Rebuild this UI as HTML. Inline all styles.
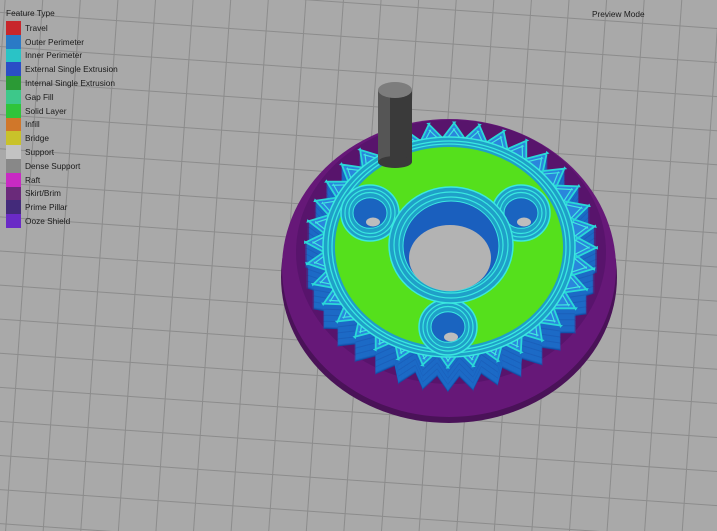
<!DOCTYPE html>
<html><head><meta charset="utf-8"><style>
html,body{margin:0;padding:0;width:717px;height:531px;overflow:hidden;background:#a9a9a9;font-family:"Liberation Sans",sans-serif}
#legend{position:absolute;left:6px;top:8px;font-size:8.3px;color:#1a1a1a}
#legend .t{margin-bottom:3px}
.r{display:flex;align-items:center;height:13.8px}
.s{width:15px;height:13.8px;margin-right:4px}
#pm{position:absolute;left:592px;top:9px;font-size:8.3px;color:#1a1a1a}
svg{position:absolute;left:0;top:0}
</style></head><body>
<svg id="g" width="717" height="531" viewBox="0 0 717 531"></svg>
<div id="legend"><div class="t">Feature Type</div>
<div class="r"><div class="s" style="background:#c8262b"></div>Travel</div>
<div class="r"><div class="s" style="background:#2a7ac6"></div>Outer Perimeter</div>
<div class="r"><div class="s" style="background:#2ac3c6"></div>Inner Perimeter</div>
<div class="r"><div class="s" style="background:#2a4ec6"></div>External Single Extrusion</div>
<div class="r"><div class="s" style="background:#2b9a35"></div>Internal Single Extrusion</div>
<div class="r"><div class="s" style="background:#3dc88a"></div>Gap Fill</div>
<div class="r"><div class="s" style="background:#2fc43a"></div>Solid Layer</div>
<div class="r"><div class="s" style="background:#d0772a"></div>Infill</div>
<div class="r"><div class="s" style="background:#c9c22a"></div>Bridge</div>
<div class="r"><div class="s" style="background:#c3c3c3"></div>Support</div>
<div class="r"><div class="s" style="background:#888"></div>Dense Support</div>
<div class="r"><div class="s" style="background:#c82ac3"></div>Raft</div>
<div class="r"><div class="s" style="background:#6a2a7a"></div>Skirt/Brim</div>
<div class="r"><div class="s" style="background:#432a7a"></div>Prime Pillar</div>
<div class="r"><div class="s" style="background:#6a2ac6"></div>Ooze Shield</div>
</div>
<div id="pm">Preview Mode</div>
<script>
var s=document.getElementById('g'),h='';
h+='<g transform="rotate(4 358 265)" stroke="#8c8c8c" stroke-width="1">';
for(var x=-200;x<1000;x+=37.5)h+='<line x1="'+x+'" y1="-200" x2="'+x+'" y2="800"/>';
for(var y=-200;y<800;y+=34)h+='<line x1="-200" y1="'+y+'" x2="1000" y2="'+y+'"/>';
h+='</g>';
function gear(cx,cy,rt,rr,ky,n){var p='';for(var i=0;i<n*4;i++){var a=i/(n*4)*Math.PI*2,r=(i%4<2)?rt:rr;var b=a+((i%4==0)?0.025:(i%4==1)?-0.025:(i%4==2)?0.03:-0.03);p+=(i?'L':'M')+(cx+r*Math.cos(b)).toFixed(1)+','+(cy+r*ky*Math.sin(b)).toFixed(1);}return p+'Z';}
// skirt
h+='<ellipse cx="449" cy="277" rx="168" ry="146" fill="#4a1258"/>';
h+='<ellipse cx="449" cy="268" rx="167" ry="149" fill="#661878"/>';
h+='<ellipse cx="451" cy="252" rx="155" ry="132" fill="#58146c"/>';
// gear side
h+='<path d="'+gear(451,270,146,126,0.84,36)+'" fill="#0f4fa8"/>';
for(var k=0;k<24;k++)h+='<path d="'+gear(451,269-k,146,126,0.84,36)+'" fill="'+(k%6==0?'#1a5fba':'#1c6ac6')+'"/>';
h+='<path d="'+gear(451,245,146,126,0.84,36)+'" fill="#2a86dc" stroke="#2ad8d8" stroke-width="1.8"/>';
h+='<path d="'+gear(451,245,138,120,0.84,36)+'" fill="none" stroke="#40e8e0" stroke-width="1.2"/>';
// ring
h+='<ellipse cx="449" cy="247" rx="126" ry="110" fill="#1fa0c8" stroke="#3ae8e0" stroke-width="1.5"/>';
h+='<ellipse cx="449" cy="247" rx="121" ry="106" fill="none" stroke="#3ae8e0" stroke-width="1.3"/>';
h+='<ellipse cx="449" cy="247" rx="117" ry="103" fill="none" stroke="#3ae8e0" stroke-width="1.3"/>';
h+='<ellipse cx="449" cy="247" rx="114" ry="100" fill="#55e01c"/>';
function boss(cx,cy,r){h+='<ellipse cx="'+cx+'" cy="'+cy+'" rx="'+(r+12)+'" ry="'+(r+11)+'" fill="#1fa0c8" stroke="#3ae8e0" stroke-width="1.5"/>';
h+='<ellipse cx="'+cx+'" cy="'+cy+'" rx="'+(r+8)+'" ry="'+(r+7)+'" fill="none" stroke="#3ae8e0" stroke-width="1.2"/>';
h+='<ellipse cx="'+cx+'" cy="'+cy+'" rx="'+(r+4)+'" ry="'+(r+3.5)+'" fill="none" stroke="#3ae8e0" stroke-width="1.2"/>';
h+='<ellipse cx="'+cx+'" cy="'+cy+'" rx="'+r+'" ry="'+(r*0.9)+'" fill="#1a64c0" stroke="#3ae8e0"/>';}
boss(370,213,17);boss(521,213,17);boss(448,327,17);
[[373,222],[524,222],[451,337]].forEach(function(c){h+='<ellipse cx="'+c[0]+'" cy="'+c[1]+'" rx="7" ry="4.5" fill="#bdbdbd"/>';});
h+='<ellipse cx="451" cy="245" rx="62" ry="58" fill="#1fa0c8" stroke="#3ae8e0" stroke-width="1.5"/>';
h+='<ellipse cx="451" cy="245" rx="57" ry="53" fill="none" stroke="#3ae8e0" stroke-width="1.2"/>';
h+='<ellipse cx="451" cy="245" rx="52" ry="48" fill="none" stroke="#3ae8e0" stroke-width="1.2"/>';
h+='<ellipse cx="451" cy="246" rx="48" ry="45" fill="#1a5fbe" stroke="#3ae8e0"/>';
h+='<ellipse cx="450" cy="258" rx="41" ry="33" fill="#b3b3b3"/>';
// pillar
h+='<rect x="378" y="90" width="34" height="72" fill="#3a3a3a"/>';
h+='<rect x="378" y="90" width="12" height="72" fill="#555"/>';
h+='<ellipse cx="395" cy="162" rx="17" ry="6" fill="#3a3a3a"/>';
h+='<ellipse cx="395" cy="90" rx="17" ry="8" fill="#7d7d7d"/>';
s.innerHTML=h;
</script>
</body></html>
